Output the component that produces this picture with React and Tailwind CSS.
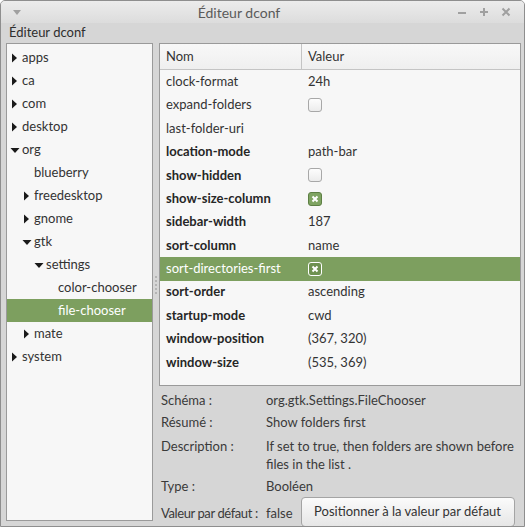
import React from 'react';

const font = { fontFamily: 'Lato, "Noto Sans", "DejaVu Sans", sans-serif' };

const tree = [
  { name: 'apps', level: 0, arrow: 'right' },
  { name: 'ca', level: 0, arrow: 'right' },
  { name: 'com', level: 0, arrow: 'right' },
  { name: 'desktop', level: 0, arrow: 'right' },
  { name: 'org', level: 0, arrow: 'down' },
  { name: 'blueberry', level: 1 },
  { name: 'freedesktop', level: 1, arrow: 'right' },
  { name: 'gnome', level: 1, arrow: 'right' },
  { name: 'gtk', level: 1, arrow: 'down' },
  { name: 'settings', level: 2, arrow: 'down' },
  { name: 'color-chooser', level: 3 },
  { name: 'file-chooser', level: 3, selected: true },
  { name: 'mate', level: 1, arrow: 'right' },
  { name: 'system', level: 0, arrow: 'right' },
];

const keys = [
  { name: 'clock-format', value: '24h' },
  { name: 'expand-folders', check: false },
  { name: 'last-folder-uri', value: '' },
  { name: 'location-mode', value: 'path-bar', bold: true },
  { name: 'show-hidden', check: false, bold: true },
  { name: 'show-size-column', check: true, bold: true },
  { name: 'sidebar-width', value: '187', bold: true },
  { name: 'sort-column', value: 'name', bold: true },
  { name: 'sort-directories-first', check: true, bold: true, selected: true },
  { name: 'sort-order', value: 'ascending', bold: true },
  { name: 'startup-mode', value: 'cwd', bold: true },
  { name: 'window-position', value: '(367, 320)', bold: true },
  { name: 'window-size', value: '(535, 369)', bold: true },
];

const indent = ['pl-[3px]', 'pl-[15px]', 'pl-[27px]', 'pl-[39px]'];

function Arrow({ dir }) {
  if (dir === 'down') {
    return (
      <svg width="10" height="10" viewBox="0 0 10 10" className="shrink-0">
        <path d="M0.5 3 L9.5 3 L5 8 Z" fill="#1a1a1a" />
      </svg>
    );
  }
  return (
    <svg width="10" height="10" viewBox="0 0 10 10" className="shrink-0">
      <path d="M2 0.5 L7 5 L2 9.5 Z" fill="#1a1a1a" />
    </svg>
  );
}

function Check({ on, selected }) {
  if (on) {
    return (
      <div className={`w-[14px] h-[14px] rounded-[3px] border flex items-center justify-center ${selected ? 'border-white bg-[#6e9150]' : 'border-[#5d7f44] bg-[#7fa462]'}`}>
        <svg width="8" height="8" viewBox="0 0 8 8">
          <path d="M1.5 1.5 L6.5 6.5 M6.5 1.5 L1.5 6.5" stroke="#fff" strokeWidth="2" />
        </svg>
      </div>
    );
  }
  return <div className="w-[14px] h-[14px] rounded-[3px] border border-[#a8a8a8] bg-gradient-to-b from-[#fdfdfd] to-[#ececec]" />;
}

export default function App() {
  return (
    <div className="w-[525px] h-[527px] bg-[#d6d6d6] text-[#3a3a3a] text-[13px] flex flex-col overflow-hidden border border-[#8e8e8e] rounded-t-[5px]" style={font}>
      {/* Title bar */}
      <div className="h-[22px] flex items-center px-[10px] bg-gradient-to-b from-[#ececec] to-[#dcdcdc] shrink-0">
        <svg width="10" height="8" viewBox="0 0 10 8" className="ml-[1px]">
          <path d="M1 2 L9 2 L5 7 Z" fill="#a0a0a0" />
        </svg>
        <div className="flex-1 text-center text-[14px] text-[#5a5a5a]">Éditeur dconf</div>
        <div className="flex items-center gap-[10px] pr-[2px]">
          <svg width="12" height="12" viewBox="0 0 12 12"><path d="M2 7 H10" stroke="#a0a0a0" strokeWidth="2" /></svg>
          <svg width="12" height="12" viewBox="0 0 12 12"><path d="M2 6 H10 M6 2 V10" stroke="#a0a0a0" strokeWidth="2" /></svg>
          <svg width="12" height="12" viewBox="0 0 12 12"><path d="M2.5 2.5 L9.5 9.5 M9.5 2.5 L2.5 9.5" stroke="#a0a0a0" strokeWidth="2" /></svg>
        </div>
      </div>
      {/* Menu bar */}
      <div className="h-[20px] flex items-center px-[8px] text-[#2e2e2e] shrink-0">Éditeur dconf</div>

      {/* Content */}
      <div className="flex-1 flex pl-[5px] pr-[3px] pb-[5px] min-h-0">
        {/* Directory tree */}
        <div className="w-[147px] border border-[#9a9a9a] bg-[#f7f7f7] pt-[2px] shrink-0">
          {tree.map((t) => (
            <div
              key={t.name}
              className={`h-[23px] flex items-center ${indent[t.level]} ${t.selected ? 'bg-[#7d9f5f] text-white' : 'text-[#333]'}`}
            >
              <div className="w-[12px] flex items-center">{t.arrow && <Arrow dir={t.arrow} />}</div>
              <span>{t.name}</span>
            </div>
          ))}
        </div>

        {/* Pane handle */}
        <div className="w-[6px] flex flex-col items-center justify-center gap-[2px] shrink-0 pt-[6px]">
          {[0, 1, 2, 3, 4].map((i) => (
            <div key={i} className="w-[2px] h-[2px] rounded-full bg-[#a8a8a8]" />
          ))}
        </div>

        {/* Right column */}
        <div className="flex-1 flex flex-col min-w-0">
          <div className="h-[343px] border border-[#9a9a9a] bg-[#f7f7f7] shrink-0">
            <div className="h-[26px] flex border-b border-[#c4c4c4] bg-gradient-to-b from-[#f8f8f8] to-[#efefef] text-[#333]">
              <div className="w-[142px] px-[6px] flex items-center border-r border-[#c4c4c4]">Nom</div>
              <div className="flex-1 px-[6px] flex items-center">Valeur</div>
            </div>
            {keys.map((k) => (
              <div
                key={k.name}
                className={`h-[23.4px] flex items-center ${k.selected ? 'bg-[#7d9f5f] text-white' : 'text-[#333]'}`}
              >
                <div className={`w-[142px] pl-[6px] whitespace-nowrap ${k.bold ? 'font-bold text-[#262626]' : ''} ${k.selected ? 'text-white font-normal' : ''}`}>
                  {k.name}
                </div>
                <div className="flex-1 pl-[6px] flex items-center">
                  {k.check !== undefined ? <Check on={k.check} selected={k.selected} /> : k.value}
                </div>
              </div>
            ))}
          </div>

          {/* Info */}
          <div className="flex flex-col pt-[4px] pl-[2px] text-[#3a3a3a]">
            <div className="h-[22px] flex items-center">
              <div className="w-[105px]">Schéma :</div>
              <div>org.gtk.Settings.FileChooser</div>
            </div>
            <div className="h-[22px] flex items-center">
              <div className="w-[105px]">Résumé :</div>
              <div>Show folders first</div>
            </div>
            <div className="flex pt-[3px] pb-[3px] leading-[18px]">
              <div className="w-[105px] shrink-0">Description :</div>
              <div>If set to true, then folders are shown before files in the list .</div>
            </div>
            <div className="h-[22px] flex items-center">
              <div className="w-[105px]">Type :</div>
              <div>Booléen</div>
            </div>
            <div className="flex items-start whitespace-nowrap">
              <div className="w-[105px] shrink-0 pt-[6px] tracking-[-0.4px]">Valeur par défaut :</div>
              <div className="pt-[6px]">false</div>
              <button className="ml-[8px] mt-[-1px] h-[30px] w-[214px] rounded-[4px] border border-[#a4a4a4] bg-gradient-to-b from-[#fbfbfb] to-[#e6e6e6] text-[#333] shadow-[0_1px_0_rgba(255,255,255,0.6)]">
                Positionner à la valeur par défaut
              </button>
            </div>
          </div>
        </div>
      </div>
    </div>
  );
}
